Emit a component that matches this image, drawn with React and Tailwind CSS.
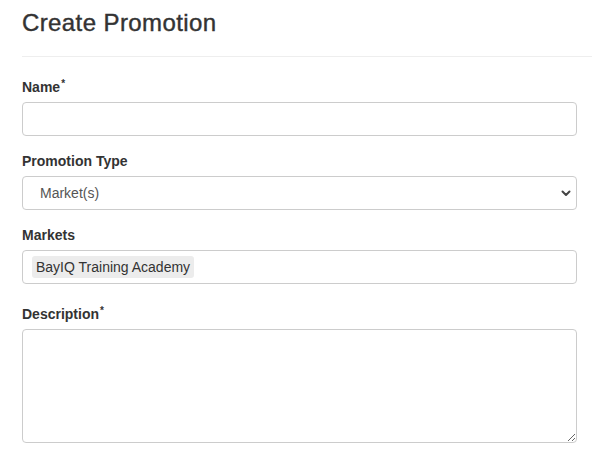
import { useState } from "react";

function Label({ children, required }) {
  return (
    <label className="block mb-[5px] text-[14px] leading-5 font-bold text-[#333]">
      {children}
      {required && <span className="relative -top-[5px] ml-px text-[10px] leading-none">*</span>}
    </label>
  );
}

const inputClass =
  "block w-full h-[34px] bg-white border border-[#ccc] rounded-[4px] px-3 text-[14px] text-[#555] focus:outline-none";

export default function App() {
  const [name, setName] = useState("");
  const [type, setType] = useState("markets");
  const [description, setDescription] = useState("");

  return (
    <div className="min-h-screen bg-white pl-[22px] pt-[10px] font-['Liberation_Sans',Arial,sans-serif] text-[#333]">
      <h3 className="text-[24px] leading-[26px] tracking-[0.4px] text-[#333] [-webkit-text-stroke:0.4px_#333]">
        Create Promotion
      </h3>
      <hr className="mt-5 mb-5 border-t border-[#eee]" />

      <form className="pr-[15px]" onSubmit={(e) => e.preventDefault()}>
        <div className="mb-[15px]">
          <Label required>Name</Label>
          <input
            type="text"
            value={name}
            onChange={(e) => setName(e.target.value)}
            className={inputClass}
          />
        </div>

        <div className="mb-[15px]">
          <Label>Promotion Type</Label>
          <div className="relative">
            <select
              value={type}
              onChange={(e) => setType(e.target.value)}
              className={inputClass + " appearance-none pl-[17px] text-[#333]"}
            >
              <option value="markets">Market(s)</option>
              <option value="all">All Markets</option>
            </select>
            <svg
              className="absolute right-[4px] top-1/2 -translate-y-1/2 pointer-events-none"
              width="14"
              height="14"
              viewBox="0 0 14 14"
            >
              <path d="M3.5 5.5 L7 9 L10.5 5.5" fill="none" stroke="#444" strokeWidth="2" strokeLinecap="round" strokeLinejoin="round" />
            </svg>
          </div>
        </div>

        <div className="mb-5">
          <Label>Markets</Label>
          <div className={inputClass + " flex items-center pl-[9px]"}>
            <span className="bg-[#ececec] rounded-[3px] px-[4px] h-[22px] leading-[22px] text-[14px] text-[#333]">
              BayIQ Training Academy
            </span>
          </div>
        </div>

        <div className="mb-[15px]">
          <Label required>Description</Label>
          <textarea
            value={description}
            onChange={(e) => setDescription(e.target.value)}
            className="block w-full h-[114px] bg-white border border-[#ccc] rounded-[4px] px-3 py-1.5 text-[14px] text-[#555] focus:outline-none"
          />
        </div>
      </form>
    </div>
  );
}
